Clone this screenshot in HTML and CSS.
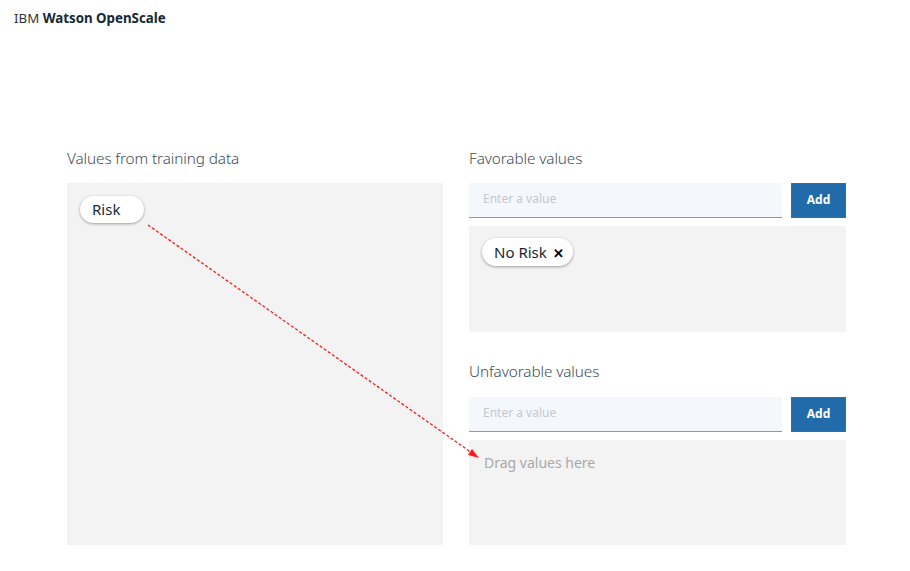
FILE: index.html
```html
<!DOCTYPE html>
<html>
<head>
<meta charset="utf-8">
<link rel="stylesheet" href="styles.css">
</head>
<body>
<header class="topbar"><span class="brand-ibm">IBM</span> <span class="brand-name">Watson OpenScale</span></header>
<main class="layout">
  <section class="col">
    <h2 class="col-title">Values from training data</h2>
    <div class="panel panel-source">
      <span class="chip">Risk</span>
    </div>
  </section>
  <section class="col">
    <h2 class="col-title">Favorable values</h2>
    <div class="entry-row">
      <div class="field">Enter a value</div>
      <button class="add-btn">Add</button>
    </div>
    <div class="panel panel-target">
      <span class="chip chip-removable">No Risk <span class="chip-x">&#x2715;</span></span>
    </div>
    <h2 class="col-title col-title-second">Unfavorable values</h2>
    <div class="entry-row">
      <div class="field">Enter a value</div>
      <button class="add-btn">Add</button>
    </div>
    <div class="panel panel-target panel-empty">
      <span class="drop-hint">Drag values here</span>
    </div>
  </section>
</main>
<svg class="drag-arrow" width="910" height="571" viewBox="0 0 910 571">
  <line x1="148" y1="225" x2="472" y2="453" stroke="#ff1a1a" stroke-width="1.3" stroke-dasharray="3 2"/>
  <polygon points="479,458 468,455 472,449" fill="#ff1a1a"/>
</svg>
</body>
</html>
```
FILE: styles.css
```css
* { box-sizing: border-box; }
html, body { margin: 0; padding: 0; background: #ffffff; }
body {
  font-family: "Noto Sans", "Open Sans", sans-serif;
  color: #152935;
  position: relative;
  width: 910px;
  height: 571px;
  overflow: hidden;
}
.topbar {
  height: 36px;
  padding: 9px 0 0 14px;
  font-size: 13.3px;
  line-height: 18px;
  color: #152935;
}
.brand-ibm { font-weight: 400; color: #333; }
.brand-name { font-weight: 700; color: #152935; }
.layout {
  display: flex;
  gap: 26px;
  padding: 112px 0 0 67px;
}
.col { width: 377px; display: flex; flex-direction: column; }
.col:first-child { width: 376px; }
.col-title {
  margin: 0 0 15px 0;
  font-size: 15.3px;
  line-height: 20px;
  font-weight: 300;
  color: #3d4d58;
  letter-spacing: -0.1px;
}
.col-title-second { margin-top: 29px; margin-bottom: 16px; }
.panel { background: #f3f3f3; }
.panel-source { height: 362px; padding: 13px 13px; }
.panel-target { height: 106px; padding: 12px 13px; margin-top: 8px; }
.panel-empty { height: 105px; padding: 11px 15px; }
.chip {
  display: inline-flex;
  align-items: center;
  height: 27px;
  padding: 0 24px 1px 12px;
  background: #ffffff;
  border-radius: 14px;
  box-shadow: 0 1px 3px rgba(0,0,0,0.35);
  font-size: 15px;
  color: #152935;
}
.chip-removable { padding: 0 9px 1px 12px; height: 28px; }
.chip-x { font-size: 13px; font-weight: 700; margin-left: 6px; margin-top: 3px; color: #000; }
.entry-row { display: flex; height: 35px; }
.field {
  width: 313px;
  height: 35px;
  background: #f4f7fb;
  border-bottom: 1px solid #8d9aa3;
  padding: 0 14px;
  font-size: 12px;
  line-height: 32px;
  color: #c3c8ce;
}
.add-btn {
  margin-left: 9px;
  width: 55px;
  height: 35px;
  border: 1px solid #2c70b3;
  background: #216baa;
  color: #ffffff;
  font-family: "Noto Sans", sans-serif;
  font-weight: 700;
  font-size: 12px;
  padding: 0 0 2px 0;
}
.drop-hint { font-size: 14px; color: #a9a9a9; line-height: 16px; }
.drag-arrow { position: absolute; left: 0; top: 0; pointer-events: none; }
```
